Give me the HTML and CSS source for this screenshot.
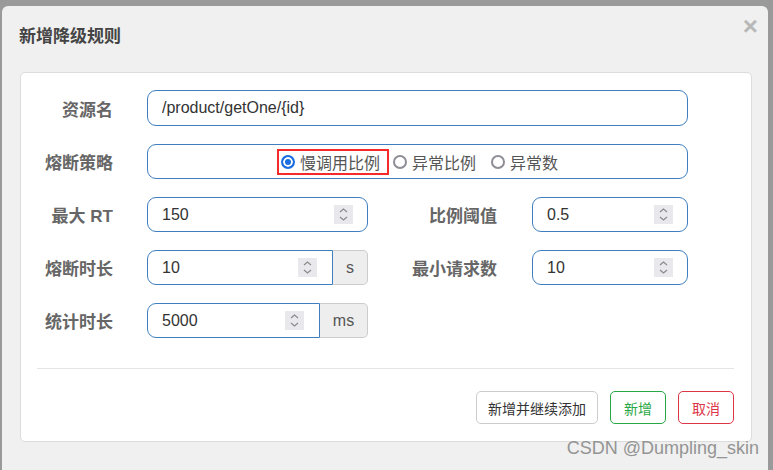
FILE: index.html
```html
<!DOCTYPE html>
<html lang="zh-CN">
<head>
    <meta charset="UTF-8">
    <meta name="viewport" content="width=device-width, initial-scale=1.0">
    <title>新增降级规则</title>
    <link rel="stylesheet" href="styles.css">
</head>
<body>
    <div class="dialog">
        <div class="dialog-header">
            <h4 class="dialog-title">新增降级规则</h4>
            <span class="close">&times;</span>
        </div>
        <div class="card">
            <div class="form-row first">
                <label class="form-label">资源名</label>
                <div class="field wide">
                    <input class="field-input" type="text" value="/product/getOne/{id}">
                </div>
            </div>
            <div class="form-row">
                <label class="form-label">熔断策略</label>
                <div class="field wide radio-group">
                    <label class="radio-option marked"><span class="radio checked"></span>慢调用比例</label>
                    <label class="radio-option"><span class="radio"></span>异常比例</label>
                    <label class="radio-option"><span class="radio"></span>异常数</label>
                </div>
            </div>
            <div class="form-row">
                <label class="form-label">最大 RT</label>
                <div class="field half">
                    <input class="field-input" type="text" value="150">
                    <span class="spinner"><svg width="19" height="19" viewBox="0 0 19 19"><rect width="19" height="19" fill="#e9e9ed"/><polyline points="6,7 9.5,4 13,7" fill="none" stroke="#8a8a8a" stroke-width="1.2"/><polyline points="6,12 9.5,15 13,12" fill="none" stroke="#8a8a8a" stroke-width="1.2"/></svg></span>
                </div>
                <label class="form-label right">比例阈值</label>
                <div class="field small">
                    <input class="field-input" type="text" value="0.5">
                    <span class="spinner"><svg width="19" height="19" viewBox="0 0 19 19"><rect width="19" height="19" fill="#e9e9ed"/><polyline points="6,7 9.5,4 13,7" fill="none" stroke="#8a8a8a" stroke-width="1.2"/><polyline points="6,12 9.5,15 13,12" fill="none" stroke="#8a8a8a" stroke-width="1.2"/></svg></span>
                </div>
            </div>
            <div class="form-row">
                <label class="form-label">熔断时长</label>
                <div class="input-group">
                    <div class="field grouped grouped-s">
                        <input class="field-input" type="text" value="10">
                        <span class="spinner"><svg width="19" height="19" viewBox="0 0 19 19"><rect width="19" height="19" fill="#e9e9ed"/><polyline points="6,7 9.5,4 13,7" fill="none" stroke="#8a8a8a" stroke-width="1.2"/><polyline points="6,12 9.5,15 13,12" fill="none" stroke="#8a8a8a" stroke-width="1.2"/></svg></span>
                    </div>
                    <span class="addon addon-s">s</span>
                </div>
                <label class="form-label right">最小请求数</label>
                <div class="field small">
                    <input class="field-input" type="text" value="10">
                    <span class="spinner"><svg width="19" height="19" viewBox="0 0 19 19"><rect width="19" height="19" fill="#e9e9ed"/><polyline points="6,7 9.5,4 13,7" fill="none" stroke="#8a8a8a" stroke-width="1.2"/><polyline points="6,12 9.5,15 13,12" fill="none" stroke="#8a8a8a" stroke-width="1.2"/></svg></span>
                </div>
            </div>
            <div class="form-row">
                <label class="form-label">统计时长</label>
                <div class="input-group">
                    <div class="field grouped grouped-ms">
                        <input class="field-input" type="text" value="5000">
                        <span class="spinner"><svg width="19" height="19" viewBox="0 0 19 19"><rect width="19" height="19" fill="#e9e9ed"/><polyline points="6,7 9.5,4 13,7" fill="none" stroke="#8a8a8a" stroke-width="1.2"/><polyline points="6,12 9.5,15 13,12" fill="none" stroke="#8a8a8a" stroke-width="1.2"/></svg></span>
                    </div>
                    <span class="addon addon-ms">ms</span>
                </div>
            </div>
            <div class="divider"></div>
            <div class="actions">
                <button class="btn btn-long">新增并继续添加</button>
                <button class="btn btn-green">新增</button>
                <button class="btn btn-red">取消</button>
            </div>
        </div>
    </div>
    <div class="watermark">CSDN @Dumpling_skin</div>
</body>
</html>
```

FILE: styles.css
```css
body {
    margin: 0;
    background: #9a9a9a;
    font-family: "Liberation Sans", "Noto Sans CJK SC", sans-serif;
    overflow: hidden;
    height: 470px;
}
.dialog {
    position: relative;
    margin: 6px 0 0 2px;
    width: 766px;
    height: 480px;
    background: #f0f0f0;
    border-radius: 6px 6px 0 0;
}
.dialog-header {
    position: relative;
    height: 66px;
    padding-left: 17px;
    box-sizing: border-box;
}
.dialog-title {
    margin: 0;
    padding-top: 20px;
    font-size: 17px;
    line-height: 22px;
    font-weight: bold;
    color: #444;
}
.close {
    position: absolute;
    top: 5px;
    right: 10px;
    font-size: 26px;
    font-weight: bold;
    color: #b8b8b8;
    line-height: 30px;
}
.card {
    margin: 0 16px 0 18px;
    background: #fff;
    border: 1px solid #dcdcdc;
    border-radius: 5px;
    padding: 17px 17px 17px 16px;
}
.form-row {
    display: flex;
    align-items: center;
    height: 35px;
    margin-top: 18px;
}
.form-row.first {
    margin-top: 0;
    height: 36px;
}
.form-label {
    width: 76px;
    margin-right: 34px;
    text-align: right;
    font-size: 17px;
    font-weight: bold;
    color: #666;
    flex-shrink: 0;
}
.form-label.right {
    width: 129px;
    margin-right: 35px;
}
.field {
    display: flex;
    align-items: center;
    height: 100%;
    box-sizing: border-box;
    border: 1px solid #3f7fbf;
    border-radius: 9px;
    padding: 0 14px;
    background: #fff;
}
.field.wide { width: 541px; }
.field.half { width: 221px; }
.field.small { width: 156px; }
.field-input {
    flex: 1;
    min-width: 0;
    border: none;
    outline: none;
    padding: 0;
    font-family: "Liberation Sans", "Noto Sans CJK SC", sans-serif;
    font-size: 16px;
    color: #333;
    background: transparent;
}
.spinner {
    display: flex;
    width: 19px;
    height: 19px;
    margin-left: 4px;
}
.input-group {
    display: flex;
    height: 100%;
}
.field.grouped {
    border-radius: 9px 0 0 9px;
    padding-right: 15px;
}
.grouped-s { width: 186px; }
.grouped-ms { width: 173px; }
.addon {
    display: flex;
    align-items: center;
    justify-content: center;
    box-sizing: border-box;
    height: 100%;
    background: #eee;
    border: 1px solid #ccc;
    border-left: none;
    border-radius: 0 5px 5px 0;
    font-size: 16px;
    color: #555;
}
.addon-s { width: 35px; }
.addon-ms { width: 48px; }
.radio-group {
    justify-content: center;
}
.radio-option {
    display: flex;
    align-items: center;
    gap: 5px;
    font-size: 16px;
    color: #555;
    margin-right: 15px;
}
.radio-option:last-child {
    margin-right: 0;
}
.radio-option.marked {
    height: 22px;
    border: 2px solid #f52a2a;
    padding: 0 7px 0 2px;
    margin-right: 4px;
}
.radio {
    display: inline-block;
    width: 14px;
    height: 14px;
    box-sizing: border-box;
    border: 2px solid #8e8e96;
    border-radius: 50%;
}
.radio.checked {
    border-color: #1a6fe0;
    background: #1a6fe0;
    box-shadow: inset 0 0 0 2px #fff;
}
.divider {
    margin-top: 30px;
    height: 1px;
    background: #e5e5e5;
}
.actions {
    display: flex;
    justify-content: flex-end;
    gap: 12px;
    margin-top: 22px;
}
.btn {
    height: 33px;
    padding: 0 13px;
    background: #fff;
    border: 1px solid #ccc;
    border-radius: 5px;
    font-family: "Liberation Sans", "Noto Sans CJK SC", sans-serif;
    font-size: 14px;
    color: #333;
}
.btn-long {
    padding: 0 11px;
}
.btn-green {
    border-color: #28a745;
    color: #28a745;
}
.btn-red {
    border-color: #dc3545;
    color: #dc3545;
}
.watermark {
    position: absolute;
    top: 438px;
    right: 14px;
    font-size: 18px;
    color: #949494;
}
```
